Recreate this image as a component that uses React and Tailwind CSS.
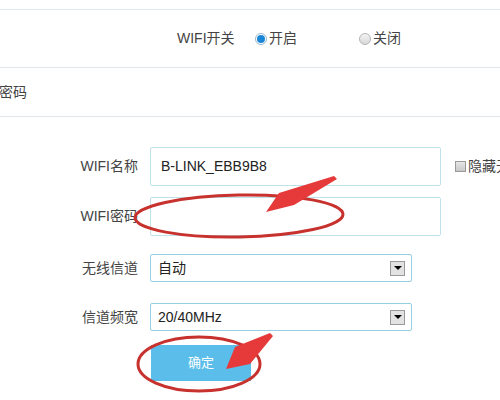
import React from "react";

const font = { fontFamily: '"Liberation Sans", "Noto Sans CJK SC", sans-serif' };

function Radio({ checked, label }) {
  return (
    <label className="flex items-center gap-[2px] text-[14px] text-[#444]">
      {checked ? (
        <span className="w-[12px] h-[12px] rounded-full border border-[#9ab8d0] bg-white flex items-center justify-center">
          <span className="w-[8px] h-[8px] rounded-full bg-[#1b86d6]" />
        </span>
      ) : (
        <span className="w-[12px] h-[12px] rounded-full border border-[#b4b4b4] bg-gradient-to-b from-[#f4f4f4] to-[#d8d8d8]" />
      )}
      <span>{label}</span>
    </label>
  );
}

function SelectBox({ value }) {
  return (
    <div className="shrink-0 ml-[12px] w-[262px] h-[28px] border border-[#93d1e2] rounded-[2px] flex items-center justify-between pl-[7px] pr-[6px] text-[14px] text-[#222]">
      <span>{value}</span>
      <span className="w-[15px] h-[15px] border border-[#9a9a9a] bg-[#e2e2e2] flex items-center justify-center">
        <span className="w-0 h-0 border-l-[4px] border-r-[4px] border-t-[4px] border-l-transparent border-r-transparent border-t-black" />
      </span>
    </div>
  );
}

function Annotations() {
  return (
    <svg className="absolute inset-0 pointer-events-none" width="500" height="400" viewBox="0 0 500 400">
      <ellipse cx="239" cy="216" rx="104" ry="21" fill="none" stroke="#c8322e" strokeWidth="3" transform="rotate(-1 239 216)" />
      <polygon points="266,212 279,193 334,176 337,179 294,205" fill="#e63a3a" />
      <ellipse cx="199" cy="364" rx="61" ry="27" fill="none" stroke="#c8322e" strokeWidth="3" />
      <polygon points="226,369 235,347 270,333 273,336 250,364" fill="#e63a3a" />
    </svg>
  );
}

export default function App() {
  return (
    <div className="relative w-[500px] h-[400px] overflow-hidden bg-white text-[#444]" style={font}>
      <div className="h-[10px] border-b border-[#e1e7ea]" />

      <div className="h-[58px] flex items-center border-b border-[#e1e7ea] pl-[177px] text-[14px]">
        <span className="w-[58px] whitespace-nowrap">WIFI开关</span>
        <div className="ml-[20px] w-[104px]">
          <Radio checked label="开启" />
        </div>
        <Radio label="关闭" />
      </div>

      <div className="h-[49px] flex items-center border-b border-[#e1e7ea] text-[14px]">
        <span className="-ml-[1px]">密码</span>
      </div>

      <div className="pt-[30px]">
        <div className="flex items-center">
          <span className="shrink-0 w-[138px] text-right text-[14px] whitespace-nowrap">WIFI名称</span>
          <div className="shrink-0 ml-[12px] w-[291px] h-[39px] border border-[#bfe2ea] rounded-[2px] flex items-center pl-[10px] text-[14px] text-[#222]">
            B-LINK_EBB9B8
          </div>
          <label className="shrink-0 ml-[14px] flex items-center gap-[2px] text-[14px] whitespace-nowrap">
            <span className="w-[11px] h-[11px] border border-[#9a9a9a] bg-gradient-to-b from-[#e6e6e6] to-[#c8c8c8]" />
            <span>隐藏无线</span>
          </label>
        </div>

        <div className="flex items-center mt-[11px]">
          <span className="shrink-0 w-[138px] text-right text-[14px] whitespace-nowrap">WIFI密码</span>
          <div className="shrink-0 ml-[12px] w-[291px] h-[39px] border border-[#bfe2ea] rounded-[2px]" />
        </div>

        <div className="flex items-center mt-[18px]">
          <span className="shrink-0 w-[138px] text-right text-[14px]">无线信道</span>
          <SelectBox value="自动" />
        </div>

        <div className="flex items-center mt-[21px]">
          <span className="shrink-0 w-[138px] text-right text-[14px]">信道频宽</span>
          <SelectBox value="20/40MHz" />
        </div>

        <button className="mt-[14px] ml-[151px] w-[100px] h-[36px] bg-[#5bbde9] text-white text-[13px]">
          确定
        </button>
      </div>

      <Annotations />
    </div>
  );
}
